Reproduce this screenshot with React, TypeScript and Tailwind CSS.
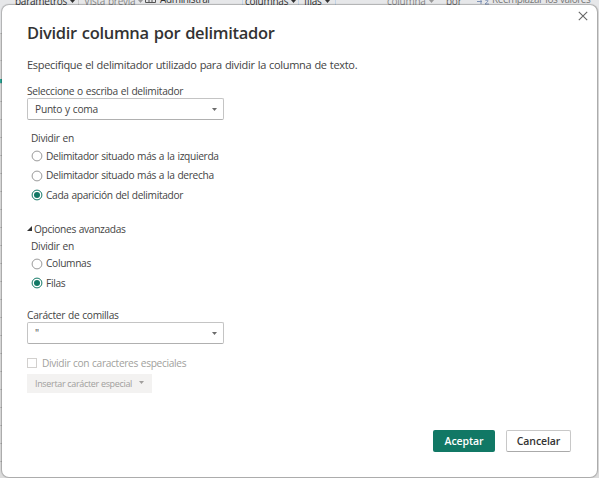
import type { ReactNode } from 'react';

function Caret({ className = 'text-[#6b6b6b]' }: { className?: string }) {
  return (
    <svg width="5" height="3" viewBox="0 0 5 3" className={className} aria-hidden="true">
      <path d="M0 0h5L2.5 3z" fill="currentColor" />
    </svg>
  );
}

function Radio({ checked = false, children }: { checked?: boolean; children: ReactNode }) {
  return (
    <label className="flex h-[19.5px] items-center gap-[3px] tracking-[-0.33px]">
      <svg width="12" height="12" viewBox="0 0 12 12" className="mt-px" aria-hidden="true">
        <circle cx="6" cy="6" r="4.9" fill="#fff" stroke={checked ? '#117865' : '#9a9a9a'} />
        {checked && <circle cx="6" cy="6" r="3" fill="#117865" />}
      </svg>
      <span>{children}</span>
    </label>
  );
}

function Select({ value }: { value: string }) {
  return (
    <div className="flex h-[22px] w-[197px] items-center justify-between rounded-[2px] border border-[#c4c4c4] border-b-[#b0b0b0] pr-[6px] pl-[7px] tracking-[-0.25px]">
      <span>{value}</span>
      <Caret />
    </div>
  );
}

const gridRows = Array.from({ length: 25 }, (_, i) => i);

export default function App() {
  return (
    <div className="relative h-[478px] w-[599px] overflow-hidden bg-[#dcdcdc] font-['Open_Sans','Noto_Sans',sans-serif] text-[10.2px] leading-4 tracking-[-0.28px] whitespace-nowrap text-[#444] [word-spacing:0.5px]">
      <div className="relative h-[14px] overflow-hidden bg-[#e6e7e9] text-[10px] leading-[12px] tracking-[-0.25px] text-[#333]">
        <span className="absolute -top-[5px] left-[15px] flex items-center gap-[3px]">parámetros <Caret className="mt-px text-[#333]" /></span>
        <span className="absolute top-0 left-[78px] h-3 w-px bg-[#c8c8c8]" />
        <span className="absolute -top-[5px] left-[84px] flex items-center gap-[3px] text-[#888]">Vista previa <Caret className="mt-px text-[#999]" /></span>
        <svg className="absolute top-0 left-[145px] text-[#555]" width="11" height="4"><path d="M.5 0v2.5h10V0M4 0v2M7 0v2" stroke="currentColor" fill="none" /></svg>
        <span className="absolute -top-[7px] left-[160px] tracking-[-0.35px]">Administrar</span>
        <span className="absolute -top-[5px] left-[242px] flex h-3 items-center gap-[3px] border-x border-[#c3d5e8] px-[2px]">columnas <Caret className="mt-px text-[#333]" /></span>
        <span className="absolute -top-[5px] left-[298px] flex h-3 items-center gap-[3px] border-x border-[#c3d5e8] px-[5px]">filas <Caret className="mt-px text-[#333]" /></span>
        <span className="absolute -top-[5px] left-[387px] flex items-center gap-[3px] text-[#888]">columna <Caret className="mt-px text-[#999]" /></span>
        <span className="absolute -top-[5px] left-[446px] text-[#666]">por</span>
        <svg className="absolute top-0 left-[477px] text-[#7f93b8]" width="13" height="5" aria-hidden="true">
          <path d="M0 1.500h5M4 0v4M8.500 .5q2-1 2.500 0T8 4h4" stroke="currentColor" fill="none" />
        </svg>
        <span className="absolute -top-[7px] left-[492px] tracking-[-0.45px] text-[#777]">Reemplazar los valores</span>
      </div>
      <div className="h-[464px]">
        <div className="h-[20px] border-b border-[#c4c4c4] bg-[#e6e7e9]" />
        <div className="h-[27px] border-b border-[#c4c4c4]" />
        <div className="flex h-[23px] items-end border-b border-[#c4c4c4]">
          <span className="h-1 w-2 bg-[#2aa897]" />
        </div>
        {gridRows.map((row) => (
          <div key={row} className="h-[18px] border-b border-[#bdbdbd]" />
        ))}
      </div>

      <div role="dialog" className="absolute top-[5px] left-[2px] flex h-[472px] w-[595px] flex-col rounded-[7px] bg-white pl-[25px] shadow-[0_0_1px_1px_rgba(0,0,0,0.24),2px_0_0_#dcdcdc]">
        <svg className="absolute top-[6px] right-[9px] text-[#666]" width="10" height="10" viewBox="0 0 10 10" aria-label="Cerrar">
          <path d="M.8.8l8.4 8.4M9.2.8L.8 9.2" stroke="currentColor" strokeWidth="1.1" />
        </svg>
        <h1 className="mt-4 h-6 text-[16.5px] leading-6 font-semibold tracking-[-0.32px] text-[#333] [word-spacing:1px]">Dividir columna por delimitador</h1>
        <p className="mt-3 h-4 text-[11px] tracking-[-0.3px]">Especifique el delimitador utilizado para dividir la columna de texto.</p>

        <div className="mt-[10px] h-[15px]">Seleccione o escriba el delimitador</div>
        <Select value="Punto y coma" />

        <div className="mt-[10px] pl-1">
          <div className="h-4">Dividir en</div>
          <Radio>Delimitador situado más a la izquierda</Radio>
          <Radio>Delimitador situado más a la derecha</Radio>
          <Radio checked>Cada aparición del delimitador</Radio>
        </div>

        <div className="mt-[16px] flex h-4 items-center gap-[2px] tracking-[-0.33px]">
          <svg width="5" height="5" viewBox="0 0 5 5" aria-hidden="true"><path d="M5 0v5H0z" fill="#333" /></svg>
          <span>Opciones avanzadas</span>
        </div>
        <div className="mt-px pl-1">
          <div className="h-4">Dividir en</div>
          <Radio>Columnas</Radio>
          <Radio checked>Filas</Radio>
        </div>

        <div className="mt-[14px] h-[15.5px]">Carácter de comillas</div>
        <Select value={'"'} />

        <label className="mt-[11px] flex h-4 items-center gap-[5px] tracking-[-0.34px] text-[#a19f9d]">
          <span className="size-[10px] border border-[#d2d0ce]" />
          <span>Dividir con caracteres especiales</span>
        </label>
        <button disabled className="mt-[3px] flex h-[19px] w-[125px] items-center justify-between bg-[#f3f2f1] pr-[8px] pl-2 text-[9px] tracking-[-0.33px] text-[#a19f9d]">
          <span className="pt-px">Insertar carácter especial</span>
          <Caret className="mb-0.5 text-[#a19f9d]" />
        </button>

        <div className="mt-[37px] mr-[26px] flex justify-end gap-[11px] text-[10.5px] font-semibold tracking-[-0.1px]">
          <button className="h-[22px] w-[62px] rounded-[2px] bg-[#117865] text-white">Aceptar</button>
          <button className="h-[22px] w-[65px] rounded-[2px] border border-[#c8c8c8] border-b-[#aaa] text-[#333]">Cancelar</button>
        </div>
      </div>
    </div>
  );
}
